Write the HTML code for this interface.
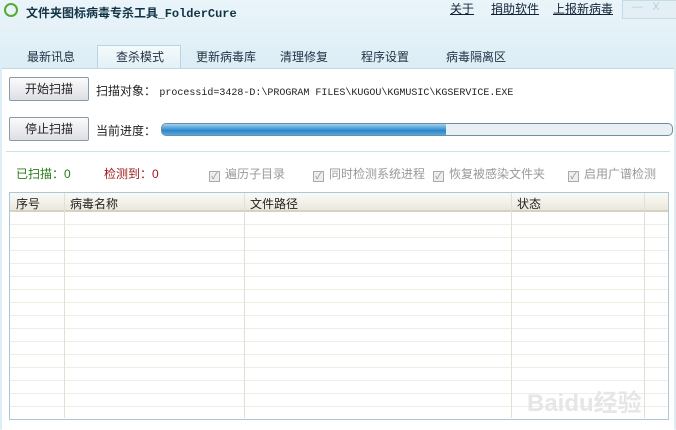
<!DOCTYPE html><html><head><meta charset="utf-8"><style>
body{margin:0;width:676px;height:429px;overflow:hidden;font-family:"Liberation Sans","Noto Sans CJK SC",sans-serif;font-size:12px;color:#222;background:linear-gradient(#eaf5fa,#dcedf5 70px);position:relative}
.a{position:absolute;white-space:nowrap}
.main{position:absolute;left:2px;top:68px;width:672px;height:361px;background:#fff;border-top:1px solid #bcd9e6}
.btn{position:absolute;width:78px;height:22px;border:1px solid #8a9aa6;border-radius:2px;background:linear-gradient(#fbfbfb,#dedfe6);text-align:center;line-height:22px;font-size:12px}
.tab{position:absolute;top:46px;height:22px;line-height:22px;font-size:12px;color:#234}
.cb{display:inline-block;width:9px;height:9px;border:1px solid #aaa;background:#eee;margin-right:5px;vertical-align:-1px;font-size:9px;line-height:9px;color:#888;text-align:center}
.cbl{color:#999;font-size:12px;top:165px}
</style></head><body>
<div class="a" style="left:4px;top:3px;width:14px;height:14px;border:2px solid #5a3;border-radius:50%;box-sizing:border-box"></div>
<div class="a" style="left:26px;top:4px;font-weight:bold;font-size:12px;color:#134">文件夹图标病毒专杀工具_<span style="font-family:'Liberation Mono',monospace">FolderCure</span></div>
<div class="a" style="left:450px;top:0px;text-decoration:underline;color:#123">关于</div>
<div class="a" style="left:491px;top:0px;text-decoration:underline;color:#123">捐助软件</div>
<div class="a" style="left:553px;top:0px;text-decoration:underline;color:#123">上报新病毒</div>
<div class="a" style="left:622px;top:0;width:54px;height:17px;background:#e3eff5;border:1px solid #c5dbe6;color:#bcd;font-size:11px">&nbsp;&nbsp;&nbsp;—&nbsp;&nbsp;&nbsp;X</div>
<div class="a" style="left:97px;top:45px;width:82px;height:24px;background:linear-gradient(#f4fafc,#e2f0f5);border:1px solid #b8d5e2;border-bottom:none"></div>
<div class="tab" style="left:27px">最新讯息</div>
<div class="tab" style="left:116px">查杀模式</div>
<div class="tab" style="left:196px">更新病毒库</div>
<div class="tab" style="left:280px">清理修复</div>
<div class="tab" style="left:361px">程序设置</div>
<div class="tab" style="left:446px">病毒隔离区</div>
<div class="main"></div>
<div class="btn" style="left:9px;top:77px">开始扫描</div>
<div class="a" style="left:96px;top:82px">扫描对象： <span style="font-family:'Liberation Mono',monospace;font-size:10px">processid=3428-D:\PROGRAM FILES\KUGOU\KGMUSIC\KGSERVICE.EXE</span></div>
<div class="btn" style="left:9px;top:117px">停止扫描</div>
<div class="a" style="left:96px;top:122px">当前进度：</div>
<div class="a" style="left:161px;top:123px;width:510px;height:11px;border:1px solid #6b8fa5;border-radius:5px;background:#e8f0f4;overflow:hidden"><div style="width:284px;height:11px;background:linear-gradient(#9fd1f0,#2b86c9 60%,#5aa7dc)"></div></div>
<div class="a" style="left:6px;top:151px;width:664px;border-top:1px solid #cde2ea"></div>
<div class="a" style="left:16px;top:165px;color:#2a7a1a">已扫描：0</div>
<div class="a" style="left:104px;top:165px;color:#9a1a1a">检测到：0</div>
<div class="a cbl" style="left:209px"><span class="cb">✓</span>遍历子目录</div>
<div class="a cbl" style="left:313px"><span class="cb">✓</span>同时检测系统进程</div>
<div class="a cbl" style="left:433px"><span class="cb">✓</span>恢复被感染文件夹</div>
<div class="a cbl" style="left:568px"><span class="cb">✓</span>启用广谱检测</div>
<div class="a" style="left:9px;top:192px;width:658px;height:226px;border:1px solid #a9c9d6;background:repeating-linear-gradient(#fff 0,#fff 12px,#efede4 12px,#efede4 13px);background-position:0 19px"></div>
<div class="a" style="left:10px;top:193px;width:658px;height:17px;background:linear-gradient(#fbfaf6,#ebe8dc);border-bottom:2px solid #d6d2c2"></div>
<div class="a" style="left:64px;top:193px;width:1px;height:225px;background:#e2dfd3"></div>
<div class="a" style="left:244px;top:193px;width:1px;height:225px;background:#e2dfd3"></div>
<div class="a" style="left:511px;top:193px;width:1px;height:225px;background:#e2dfd3"></div>
<div class="a" style="left:644px;top:193px;width:1px;height:225px;background:#e2dfd3"></div>
<div class="a" style="left:16px;top:195px">序号</div>
<div class="a" style="left:70px;top:195px">病毒名称</div>
<div class="a" style="left:250px;top:195px">文件路径</div>
<div class="a" style="left:517px;top:195px">状态</div>
<div class="a" style="left:527px;top:383px;font-size:24px;color:#e6e6e6;font-weight:bold">Baidu经验</div>
</body></html>
